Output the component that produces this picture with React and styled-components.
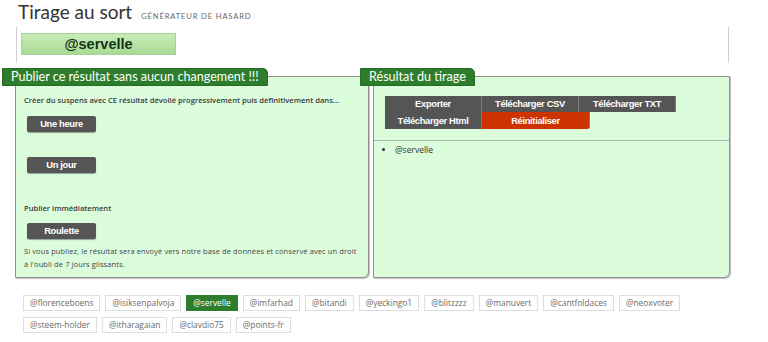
import React from "react";
import styled, { createGlobalStyle } from "styled-components";

const GlobalStyle = createGlobalStyle`
  html, body {
    margin: 0;
    padding: 0;
    background: #ffffff;
  }
  body {
    font-family: "Open Sans", "Liberation Sans", sans-serif;
    color: #333;
  }
`;

const tags = [
  "@florenceboens",
  "@isiksenpalvoja",
  "@servelle",
  "@imfarhad",
  "@bitandi",
  "@yeckingo1",
  "@blitzzzz",
  "@manuvert",
  "@cantfoldaces",
  "@neoxvoter",
  "@steem-holder",
  "@itharagaian",
  "@clavdio75",
  "@points-fr",
];

export default function App() {
  return (
    <Page>
      <GlobalStyle />
      <Header>
        <Title>Tirage au sort</Title>
        <Subtitle>Générateur de hasard</Subtitle>
      </Header>

      <WinnerBar>
        <Winner>@servelle</Winner>
      </WinnerBar>

      <Panels>
        <Panel $width={354}>
          <Tab>Publier ce résultat sans aucun changement !!!</Tab>
          <PanelBody>
            <Note $bold $top={9}>
              Créer du suspens avec CE résultat dévoilé progressivement puis
              définitivement dans...
            </Note>
            <DarkButton $top={11}>Une heure</DarkButton>
            <DarkButton $top={25}>Un jour</DarkButton>
            <Note $bold $top={30}>
              Publier immédiatement
            </Note>
            <DarkButton $top={10}>Roulette</DarkButton>
            <Paragraph>
              Si vous publiez, le résultat sera envoyé vers notre base de
              données et conservé avec un droit à l'oubli de 7 jours glissants.
            </Paragraph>
          </PanelBody>
        </Panel>

        <Panel $width={357}>
          <Tab>Résultat du tirage</Tab>
          <Toolbar>
            <ToolButton>Exporter</ToolButton>
            <ToolButton>Télécharger CSV</ToolButton>
            <ToolButton>Télécharger TXT</ToolButton>
            <ToolButton $tall>Télécharger Html</ToolButton>
            <ToolButton $danger $tall>
              Réinitialiser
            </ToolButton>
          </Toolbar>
          <Separator />
          <ResultList>
            <li>@servelle</li>
          </ResultList>
        </Panel>
      </Panels>

      <Tags>
        {tags.map((t) => (
          <Tag key={t} $active={t === "@servelle"}>
            {t}
          </Tag>
        ))}
      </Tags>
    </Page>
  );
}

const Page = styled.div`
  width: 768px;
  height: 342px;
  overflow: hidden;
`;

const Header = styled.div`
  display: flex;
  align-items: baseline;
  gap: 9px;
  height: 27px;
  padding-left: 18px;
  box-sizing: border-box;
`;

const Title = styled.h1`
  margin: 0;
  font-family: "Lato", "Noto Sans", sans-serif;
  font-weight: 400;
  font-size: 19px;
  line-height: 24px;
  color: #333;
`;

const Subtitle = styled.span`
  font-family: "Lato", "Noto Sans", sans-serif;
  font-size: 7.5px;
  letter-spacing: 0.9px;
  text-transform: uppercase;
  color: #666;
`;

const WinnerBar = styled.div`
  margin-left: 16px;
  width: 713px;
  height: 36px;
  box-sizing: border-box;
  border-left: 1px solid #cfcfcf;
  border-right: 1px solid #cfcfcf;
  padding: 6px 4px;
`;

const Winner = styled.div`
  width: 155px;
  height: 22px;
  box-sizing: border-box;
  border: 1px solid #a6d39a;
  background: linear-gradient(#c8ecb8, #a8da93);
  color: #17331a;
  font-family: "Liberation Sans", Arial, sans-serif;
  font-weight: bold;
  font-size: 14.5px;
  line-height: 20px;
  text-align: center;
`;

const Panels = styled.div`
  display: flex;
  gap: 4px;
  margin-top: 13px;
  padding-left: 15px;
`;

const Panel = styled.section`
  display: flex;
  flex-direction: column;
  width: ${(p) => p.$width}px;
  height: 202px;
  box-sizing: border-box;
  background: #dcfddc;
  border: 1px solid #8f8f8f;
  border-radius: 0 0 6px 0;
  box-shadow: 1px 1px 1px rgba(0, 0, 0, 0.25);
`;

const Tab = styled.h2`
  align-self: flex-start;
  margin: -9px 0 0 -14px;
  height: 18px;
  box-sizing: border-box;
  padding: 0 8px;
  background: #2d7d2d;
  border: 1px solid #246b24;
  border-radius: 0 5px 0 0;
  color: #ffffff;
  font-family: "Lato", "Noto Sans", sans-serif;
  font-weight: 400;
  font-size: 12.6px;
  line-height: 16px;
  white-space: nowrap;
  position: relative;
  z-index: 1;
`;

const PanelBody = styled.div`
  display: flex;
  flex-direction: column;
  align-items: flex-start;
  padding: 0 8px;
`;

const Note = styled.p`
  margin: ${(p) => p.$top}px 0 0;
  font-size: 7.6px;
  line-height: 10px;
  font-weight: ${(p) => (p.$bold ? 600 : 400)};
  color: #3a3a3a;
`;

const Paragraph = styled.p`
  margin: 6px 0 0;
  font-size: 7.5px;
  line-height: 13px;
  color: #444;
  letter-spacing: 0.1px;
`;

const DarkButton = styled.button`
  margin: ${(p) => p.$top}px 0 0 3px;
  width: 69px;
  height: 16px;
  padding: 0;
  border: none;
  border-radius: 2px;
  background: #555555;
  box-shadow: 0 1px 1px rgba(0, 0, 0, 0.35);
  color: #ffffff;
  font-family: "Liberation Sans", Arial, sans-serif;
  font-weight: bold;
  font-size: 9.4px;
  letter-spacing: -0.35px;
  line-height: 16px;
`;

const Toolbar = styled.div`
  display: flex;
  flex-wrap: wrap;
  width: 291px;
  margin: 10px 0 0 11px;
`;

const ToolButton = styled.button`
  width: ${(p) => (p.$danger ? 108 : 97)}px;
  height: ${(p) => (p.$tall ? 17 : 16)}px;
  padding: 0;
  border: none;
  border-right: 1px solid #7a7a7a;
  border-radius: ${(p) => (p.$danger ? "0 0 3px 0" : "0")};
  background: ${(p) => (p.$danger ? "#cc3300" : "#555555")};
  color: #ffffff;
  font-family: "Liberation Sans", Arial, sans-serif;
  font-weight: bold;
  font-size: 9.4px;
  letter-spacing: -0.35px;
  line-height: 16px;
  box-sizing: border-box;
`;

const Separator = styled.hr`
  margin: 11px 0 0;
  border: none;
  border-top: 1px solid #a9b9a9;
  width: 100%;
`;

const ResultList = styled.ul`
  margin: 4px 0 0;
  padding-left: 21px;
  font-size: 8.5px;
  line-height: 10px;
  color: #333;
`;

const Tags = styled.div`
  display: flex;
  flex-wrap: wrap;
  gap: 6px 5px;
  width: 707px;
  margin: 17px 0 0 23px;
`;

const Tag = styled.span`
  height: 16px;
  box-sizing: border-box;
  padding: 0 6px;
  border: 1px solid ${(p) => (p.$active ? "#2d7d2d" : "#dddddd")};
  background: ${(p) => (p.$active ? "#2d7d2d" : "#ffffff")};
  color: ${(p) => (p.$active ? "#ffffff" : "#6a6a6a")};
  font-size: 8.4px;
  line-height: 14px;
  white-space: nowrap;
`;
